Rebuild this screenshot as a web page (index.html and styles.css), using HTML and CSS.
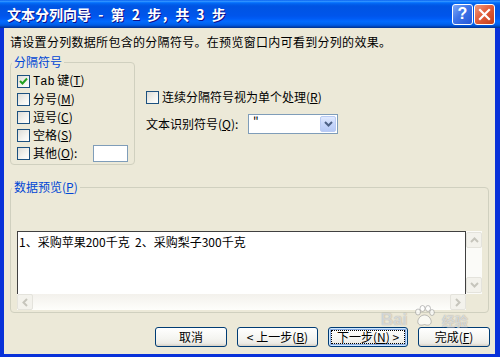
FILE: index.html
```html
<!DOCTYPE html>
<html lang="zh-CN">

<head>
    <meta charset="UTF-8" />
    <title>文本分列向导</title>
    <link rel="stylesheet" href="styles.css">
</head>

<body>
    <div class="window">
        <!-- 标题栏 -->
        <div class="titlebar">
            <span class="title">文本分列向导 - 第 2 步，共 3 步</span>
            <div class="caption-btns">
                <span class="cap-btn help">?</span>
                <span class="cap-btn close">
                    <svg width="13" height="13" viewBox="0 0 13 13">
                        <path d="M2 2 L11 11 M11 2 L2 11" stroke="#fff" stroke-width="2.2" stroke-linecap="square" />
                    </svg>
                </span>
            </div>
        </div>

        <div class="client">
            <p class="intro">请设置分列数据所包含的分隔符号。在预览窗口内可看到分列的效果。</p>

            <div class="top">
                <!-- 分隔符号 -->
                <fieldset class="group delims">
                    <legend>分隔符号</legend>
                    <div class="check">
                        <span class="box">
                            <svg width="11" height="11" viewBox="0 0 11 11">
                                <path d="M2 5 L4.5 7.5 L9 2.5" fill="none" stroke="#21a121" stroke-width="2" />
                            </svg>
                        </span>
                        <span><span class="latin">Tab</span> 键(<u>T</u>)</span>
                    </div>
                    <div class="check"><span class="box"></span><span>分号(<u>M</u>)</span></div>
                    <div class="check"><span class="box"></span><span>逗号(<u>C</u>)</span></div>
                    <div class="check"><span class="box"></span><span>空格(<u>S</u>)</span></div>
                    <div class="check">
                        <span class="box"></span><span>其他(<u>O</u>):</span>
                        <span class="textbox"></span>
                    </div>
                </fieldset>

                <div class="options">
                    <div class="check"><span class="box"></span><span>连续分隔符号视为单个处理(<u>R</u>)</span></div>
                    <div class="qualifier">
                        <span class="qualifier-label">文本识别符号(<u>Q</u>):</span>
                        <div class="combo">
                            <span class="combo-value">"</span>
                            <span class="combo-btn">
                                <svg width="9" height="6" viewBox="0 0 9 6">
                                    <path d="M1 1 L4.5 4.5 L8 1" fill="none" stroke="#4d6185" stroke-width="2" />
                                </svg>
                            </span>
                        </div>
                    </div>
                </div>
            </div>

            <!-- 数据预览 -->
            <fieldset class="group preview-group">
                <legend>数据预览(<u>P</u>)</legend>
                <div class="preview-main">
                    <div class="preview-box">1、采购苹果200千克&nbsp; 2、采购梨子300千克</div>
                    <div class="vscroll">
                        <span class="sb-btn">
                            <svg width="9" height="6" viewBox="0 0 9 6"><path d="M1 5 L4.5 1.5 L8 5" fill="none" stroke="#c6c5bc" stroke-width="2" /></svg>
                        </span>
                        <span class="sb-btn">
                            <svg width="9" height="6" viewBox="0 0 9 6"><path d="M1 1 L4.5 4.5 L8 1" fill="none" stroke="#c6c5bc" stroke-width="2" /></svg>
                        </span>
                    </div>
                </div>
                <div class="hscroll">
                    <span class="sb-btn">
                        <svg width="6" height="9" viewBox="0 0 6 9"><path d="M5 1 L1.5 4.5 L5 8" fill="none" stroke="#c6c5bc" stroke-width="2" /></svg>
                    </span>
                    <span class="sb-btn">
                        <svg width="6" height="9" viewBox="0 0 6 9"><path d="M1 1 L4.5 4.5 L1 8" fill="none" stroke="#c6c5bc" stroke-width="2" /></svg>
                    </span>
                </div>
            </fieldset>

            <!-- 底部按钮 -->
            <div class="buttons">
                <button class="btn btn-cancel">取消</button>
                <button class="btn btn-prev">&lt; 上一步(<u>B</u>)</button>
                <button class="btn btn-next default">下一步(<u>N</u>) &gt;</button>
                <button class="btn btn-finish">完成(<u>F</u>)</button>
            </div>
        </div>

        <!-- 水印 -->
        <div class="watermark">
            <span class="wm-bai">Bai</span>
            <svg class="wm-paw" width="22" height="22" viewBox="0 0 22 22">
                <g fill="rgba(255,255,255,0.7)" stroke="rgba(120,120,120,0.45)" stroke-width="1">
                    <ellipse cx="5" cy="7" rx="2.5" ry="3" />
                    <ellipse cx="9.5" cy="3.5" rx="2.5" ry="3" />
                    <ellipse cx="15" cy="3.5" rx="2.5" ry="3" />
                    <ellipse cx="19" cy="7.5" rx="2.3" ry="3" />
                    <path d="M11.5 10 C7 10 4 15 5 18 C6 21 10 20 11.5 19.5 C13 20 17 21 18 18 C19 15 16 10 11.5 10 Z" />
                </g>
            </svg>
            <span class="wm-jy">经验</span>
        </div>
    </div>
</body>

</html>
```

FILE: styles.css
```css
* {
    margin: 0;
    padding: 0;
    box-sizing: border-box;
}

body {
    font: 12px/14px "Noto Sans CJK SC", "Liberation Sans", sans-serif;
    color: #000;
}

u {
    text-decoration: underline;
    text-underline-offset: 1px;
}

.window {
    width: 500px;
    height: 357px;
    background: #0831d9;
    display: flex;
    flex-direction: column;
    position: relative;
    overflow: hidden;
}

/* 标题栏 */
.titlebar {
    height: 28px;
    flex: none;
    display: flex;
    align-items: center;
    padding: 0 5px 0 7px;
    background: linear-gradient(to bottom, #0058ee 0%, #3593ff 4%, #288eff 6%, #127dff 8%, #036ffc 10%, #0262ee 14%, #0057e5 20%, #0054e3 24%, #0055eb 56%, #005bf5 66%, #026afe 76%, #0062ef 86%, #0052d6 92%, #0040ab 96%, #003092 100%);
}

.title {
    color: #fff;
    font-weight: bold;
    font-size: 14px;
    line-height: 16px;
    white-space: pre;
    word-spacing: 4px;
    text-shadow: 1px 1px #0f1089;
}

.caption-btns {
    margin-left: auto;
    display: flex;
    gap: 1px;
}

.cap-btn {
    width: 21px;
    height: 21px;
    border: 1px solid #fff;
    border-radius: 3px;
    display: flex;
    align-items: center;
    justify-content: center;
    color: #fff;
    font: bold 16px/1 "Liberation Sans", sans-serif;
}

.help {
    background: linear-gradient(135deg, #7fa9f7 0%, #3f74e8 45%, #2457d8 100%);
}

.close {
    background: linear-gradient(135deg, #f09b7f 0%, #e35f3c 45%, #c23d1a 100%);
}

/* 客户区 */
.client {
    flex: 1;
    margin: 0 5px 3px 4px;
    background: #ece9d8;
    padding: 7px 5px 0 6px;
}

.intro {
    height: 14px;
    white-space: nowrap;
    letter-spacing: 0.3px;
}

.top {
    display: flex;
    margin-top: 6px;
}

.group {
    border: 1px solid #d0d0bf;
    border-radius: 4px;
    padding: 0 6px 2px 6px;
    min-width: 0;
}

.group legend {
    color: #0046d5;
    padding: 0 2px;
    margin-left: -5px;
    line-height: 14px;
}

.delims {
    width: 125px;
    padding-top: 3px;
}

.check {
    height: 18px;
    display: flex;
    align-items: center;
    gap: 3px;
    white-space: nowrap;
}

.box {
    width: 13px;
    height: 13px;
    flex: none;
    border: 1px solid #1c5180;
    background: linear-gradient(135deg, #dcdcd7 0%, #f4f4f0 60%, #fff 100%);
    display: flex;
    align-items: center;
    justify-content: center;
}

.latin {
    font-family: "Liberation Mono", monospace;
    font-size: 12px;
}

.textbox {
    width: 35px;
    height: 17px;
    margin-left: auto;
    background: #fff;
    border: 1px solid #7f9db9;
}

.options {
    margin-left: 11px;
    padding-top: 33px;
}

.qualifier {
    display: flex;
    align-items: center;
    margin-top: 8px;
}

.qualifier-label {
    width: 102px;
    white-space: nowrap;
}

.combo {
    width: 90px;
    height: 20px;
    background: #fff;
    border: 1px solid #7f9db9;
    display: flex;
    padding: 1px;
}

.combo-value {
    flex: 1;
    padding-left: 3px;
    line-height: 12px;
}

.combo-btn {
    width: 16px;
    border: 1px solid #b9cbf3;
    border-radius: 2px;
    background: linear-gradient(to bottom, #e1eafe 0%, #c6d6fb 50%, #b6c9f5 100%);
    display: flex;
    align-items: center;
    justify-content: center;
}

/* 数据预览 */
.preview-group {
    width: 479px;
    margin-top: 15px;
    padding-top: 37px;
}

.preview-main {
    display: flex;
    height: 63px;
}

.preview-box {
    flex: 1;
    background: #fff;
    border: 1px solid #404040;
    border-bottom: none;
    padding: 3px 0 0 1px;
    white-space: nowrap;
}

.vscroll {
    width: 16px;
    background: #fbfbf8;
    display: flex;
    flex-direction: column;
    justify-content: space-between;
    padding: 1px 0;
}

.hscroll {
    width: 449px;
    height: 16px;
    background: linear-gradient(to bottom, #f3f1ec, #fefefb);
    display: flex;
    justify-content: space-between;
}

.sb-btn {
    width: 16px;
    height: 16px;
    border: 1px solid #e4e3dc;
    border-radius: 2px;
    background: #f3f2ec;
    display: flex;
    align-items: center;
    justify-content: center;
}

/* 底部按钮 */
.buttons {
    display: flex;
    justify-content: flex-end;
    gap: 10px;
    margin-top: 14px;
}

.btn {
    height: 20px;
    border: 1px solid #003c74;
    border-radius: 3px;
    background: linear-gradient(to bottom, #fff 0%, #f4f4f0 60%, #ecebe6 85%, #d6d0c5 100%);
    font: inherit;
    color: #000;
    white-space: nowrap;
}

.btn-cancel,
.btn-finish {
    width: 72px;
}

.btn-prev {
    width: 81px;
}

.btn-next {
    width: 80px;
}

.default {
    box-shadow: inset 0 0 0 1px #cee7ff, inset 0 0 0 2px #89ade4;
    outline: 1px dotted #000;
    outline-offset: -4px;
}

/* 水印 */
.watermark {
    position: absolute;
    left: 380px;
    top: 302px;
    width: 100px;
    height: 26px;
    pointer-events: none;
}

.wm-bai {
    position: absolute;
    left: 1px;
    top: 10px;
    font: bold 17px/16px "Liberation Sans", sans-serif;
    color: rgba(255, 255, 255, 0.6);
    text-shadow: 0 0 1px rgba(90, 90, 90, 0.6);
}

.wm-paw {
    position: absolute;
    left: 33px;
    top: 3px;
}

.wm-jy {
    position: absolute;
    left: 62px;
    top: 11px;
    font: bold 13px/15px "Noto Sans CJK SC", sans-serif;
    color: rgba(255, 255, 255, 0.6);
    text-shadow: 0 0 1px rgba(90, 90, 90, 0.6);
}
```
